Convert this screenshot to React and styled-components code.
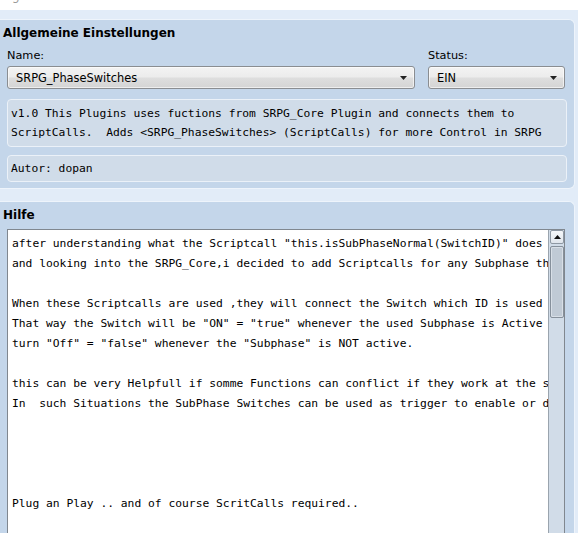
import React from "react";
import styled, { createGlobalStyle } from "styled-components";

const GlobalStyle = createGlobalStyle`
  html, body { margin: 0; padding: 0; background: #ffffff; }
  body { font-family: "DejaVu Sans", Verdana, sans-serif; color: #000; }
`;

const Page = styled.div`
  height: 533px;
  overflow: hidden;
  display: flex;
  flex-direction: column;
`;

const TopStrip = styled.div`
  height: 10px;
  overflow: hidden;
  background: #ffffff;
  padding-left: 12px;
`;

const Crumb = styled.span`
  display: block;
  margin-top: -11px;
  font-size: 12px;
  line-height: 14px;
  color: #9a9a9a;
`;

const Body = styled.div`
  flex: 1;
  min-height: 0;
  background: #e2ecf8;
  padding: 9px 3px 0 0;
  display: flex;
  flex-direction: column;
  gap: 12px;
`;

const Panel = styled.section`
  background: #c4d6ea;
  border: 1px solid #eef4fb;
  border-left: none;
  border-bottom: ${(p) => (p.$open ? "none" : "1px solid #eef4fb")};
  border-radius: ${(p) => (p.$open ? "0 6px 0 0" : "0 6px 6px 0")};
  padding: ${(p) => (p.$open ? "5px 8px 0 7px" : "5px 7px 6px 7px")};
  display: flex;
  flex-direction: column;
  flex: ${(p) => (p.$open ? "1" : "none")};
  min-height: 0;
`;

const Title = styled.h2`
  margin: 0 0 0 -4px;
  font-size: 12px;
  line-height: 16px;
  font-weight: bold;
`;

const FieldGrid = styled.div`
  display: grid;
  grid-template-columns: 1fr 137px;
  column-gap: 13px;
  margin: 8px 2px 0 0;
`;

const Field = styled.div`
  display: flex;
  flex-direction: column;
  gap: 3px;
`;

const Label = styled.label`
  font-size: 11.3px;
  line-height: 14px;
`;

const SelectBox = styled.div`
  height: 23px;
  box-sizing: border-box;
  border: 1px solid #8a8d91;
  border-radius: 3px;
  background: linear-gradient(#f3f3f3 0%, #ececec 48%, #dedede 52%, #d4d4d4 100%);
  box-shadow: inset 0 0 0 1px rgba(255, 255, 255, 0.6);
  display: flex;
  align-items: center;
  justify-content: space-between;
  padding: 0 7px 0 8px;
  font-size: 11.4px;
`;

const Arrow = () => (
  <svg width="7" height="4" viewBox="0 0 7 4">
    <polygon points="0,0 7,0 3.5,4" fill="#222" />
  </svg>
);

const Select = ({ value }) => (
  <SelectBox>
    <span>{value}</span>
    <Arrow />
  </SelectBox>
);

const InfoBox = styled.div`
  margin-top: ${(p) => p.$gap}px;
  background: #d0dce9;
  border: 1px solid #ebf1f8;
  border-radius: 4px;
  padding: ${(p) => p.$pad}px 3px;
  font-family: "DejaVu Sans Mono", monospace;
  font-size: 11.3px;
  line-height: 19px;
  white-space: pre-wrap;
`;

const HelpTitle = styled(Title)`
  margin-bottom: 6px;
`;

const HelpArea = styled.div`
  height: 330px;
  flex: none;
  margin-right: 1px;
  background: #ffffff;
  border: 1px solid #80878f;
  display: flex;
`;

const HelpText = styled.pre`
  flex: 1;
  min-width: 0;
  margin: 0;
  padding: 4px 0 0 4px;
  overflow: hidden;
  font-family: "DejaVu Sans Mono", monospace;
  font-size: 11.3px;
  line-height: 20px;
  white-space: pre;
`;

const Scrollbar = styled.div`
  width: 16px;
  flex: none;
  box-sizing: border-box;
  background: #d1dce8;
  border-left: 1px solid #9aa4ae;
  display: flex;
  flex-direction: column;
  align-items: center;
  padding: 0 0 0 1px;
  gap: 2px;
`;

const ScrollButton = styled.div`
  width: 14px;
  height: 14px;
  box-sizing: border-box;
  border: 1px solid #8e98a3;
  border-radius: 2px;
  background: linear-gradient(#f6f8fa, #dfe5ec);
  display: flex;
  align-items: center;
  justify-content: center;
`;

const Thumb = styled.div`
  width: 14px;
  height: 72px;
  box-sizing: border-box;
  border: 1px solid #86909b;
  border-radius: 2px;
  background: #c0cad5;
  box-shadow: inset 0 0 0 1px #d8dfe7;
`;

const UpArrow = () => (
  <svg width="7" height="4" viewBox="0 0 7 4">
    <polygon points="0,4 7,4 3.5,0" fill="#111" />
  </svg>
);

const helpLines = [
  'after understanding what the Scriptcall "this.isSubPhaseNormal(SwitchID)" does in SRPG,',
  "and looking into the SRPG_Core,i decided to add Scriptcalls for any Subphase that exists.",
  "",
  "When these Scriptcalls are used ,they will connect the Switch which ID is used in the Scriptcall.",
  'That way the Switch will be "ON" = "true" whenever the used Subphase is Active and',
  'turn "Off" = "false" whenever the "Subphase" is NOT active.',
  "",
  "this can be very Helpfull if somme Functions can conflict if they work at the same time.",
  "In  such Situations the SubPhase Switches can be used as trigger to enable or disable them.",
  "",
  "",
  "",
  "",
  "Plug an Play .. and of course ScritCalls required..",
];

const description =
  "v1.0 This Plugins uses fuctions from SRPG_Core Plugin and connects them to ScriptCalls.  Adds <SRPG_PhaseSwitches> (ScriptCalls) for more Control in SRPG";

export default function App() {
  return (
    <>
      <GlobalStyle />
      <Page>
        <TopStrip>
          <Crumb>g</Crumb>
        </TopStrip>
        <Body>
          <Panel>
            <Title>Allgemeine Einstellungen</Title>
            <FieldGrid>
              <Field>
                <Label>Name:</Label>
                <Select value="SRPG_PhaseSwitches" />
              </Field>
              <Field>
                <Label>Status:</Label>
                <Select value="EIN" />
              </Field>
            </FieldGrid>
            <InfoBox $gap={10} $pad={4}>
              {description}
            </InfoBox>
            <InfoBox $gap={8} $pad={3}>
              Autor: dopan
            </InfoBox>
          </Panel>
          <Panel $open>
            <HelpTitle>Hilfe</HelpTitle>
            <HelpArea>
              <HelpText>{helpLines.join("\n")}</HelpText>
              <Scrollbar>
                <ScrollButton>
                  <UpArrow />
                </ScrollButton>
                <Thumb />
              </Scrollbar>
            </HelpArea>
          </Panel>
        </Body>
      </Page>
    </>
  );
}
